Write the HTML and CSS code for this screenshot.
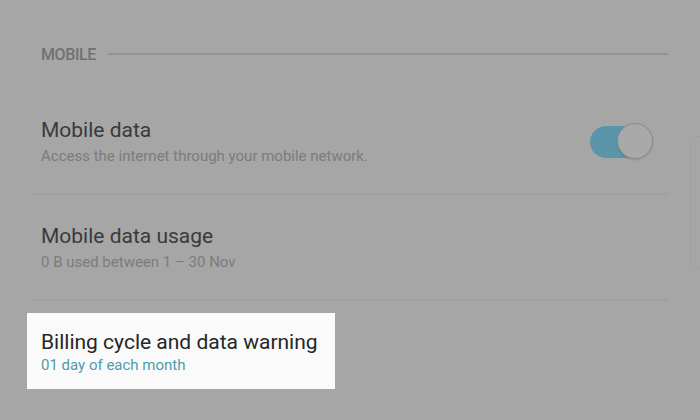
FILE: index.html
```html
<!DOCTYPE html>
<html>
<head>
<meta charset="utf-8">
<link rel="stylesheet" href="styles.css">
</head>
<body>
<div class="screen">
  <div class="list">
    <div class="section-header">
      <span class="section-title">MOBILE</span>
      <span class="section-line"></span>
    </div>
    <div class="row">
      <div class="texts">
        <div class="title">Mobile data</div>
        <div class="subtitle">Access the internet through your mobile network.</div>
      </div>
      <div class="toggle"><span class="knob"></span></div>
    </div>
    <div class="divider"></div>
    <div class="row">
      <div class="texts">
        <div class="title">Mobile data usage</div>
        <div class="subtitle">0 B used between 1 – 30 Nov</div>
      </div>
    </div>
    <div class="divider"></div>
    <div class="row">
      <div class="spotlight">
        <div class="title">Billing cycle and data warning</div>
        <div class="subtitle accent">01 day of each month</div>
      </div>
    </div>
  </div>
  <div class="scroll-indicator"></div>
</div>
</body>
</html>
```

FILE: styles.css
```css
html, body {
  margin: 0;
  padding: 0;
}
body {
  width: 700px;
  height: 420px;
  overflow: hidden;
  background: #a6a6a6;
  font-family: Roboto, "Noto Sans", sans-serif;
}
.screen {
  position: relative;
  width: 700px;
  height: 420px;
}
.list {
  margin-left: 30px;
  width: 638px;
  padding-top: 42px;
}
.section-header {
  display: flex;
  align-items: center;
  height: 24px;
  padding-left: 11px;
  margin-bottom: 23px;
}
.section-title {
  font-size: 16px;
  font-weight: 500;
  color: #717171;
  letter-spacing: -0.4px;
}
.section-line {
  flex: 1;
  height: 2px;
  background: #939393;
  margin-left: 12px;
}
.row {
  height: 104px;
  display: flex;
  align-items: center;
  padding-left: 11px;
  padding-right: 14px;
}
.texts {
  flex: 1;
}
.title {
  font-size: 21px;
  line-height: 26px;
  color: #3a3a3a;
}
.subtitle {
  font-size: 15px;
  line-height: 20px;
  margin-top: 3px;
  color: #7c7c7c;
}
.divider {
  height: 2px;
  background: #a0a0a0;
}
.toggle {
  position: relative;
  width: 58px;
  height: 32px;
  border-radius: 16px;
  background: #5a95a9;
  margin-right: 6px;
  margin-top: 1px;
}
.knob {
  position: absolute;
  right: -5px;
  top: -3px;
  width: 34px;
  height: 34px;
  border-radius: 50%;
  background: #a9a9a9;
  border: 1px solid #8a8a8a;
  box-shadow: 0 1px 2px rgba(0, 0, 0, 0.12);
}
.spotlight {
  margin-left: -14px;
  margin-top: -4px;
  width: 308px;
  height: 76px;
  box-sizing: border-box;
  padding: 16px 0 0 14px;
  background: #fafafa;
}
.spotlight .title {
  color: #262626;
}
.spotlight .subtitle {
  margin-top: 0;
}
.accent {
  color: #4e9bae;
}
.scroll-indicator {
  position: absolute;
  right: 0;
  top: 136px;
  width: 9px;
  height: 130px;
  border: 1px solid #a0a0a0;
  border-right: none;
  border-radius: 5px 0 0 5px;
}
```
